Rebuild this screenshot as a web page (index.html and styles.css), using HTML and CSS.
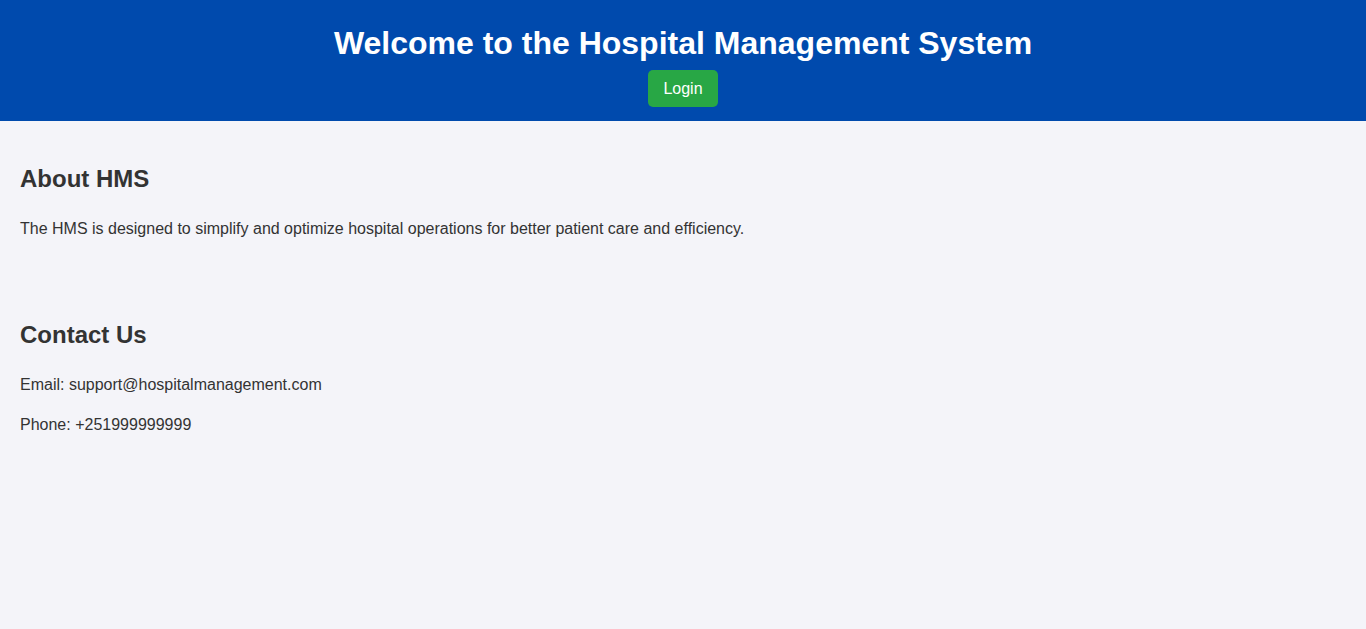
FILE: index.html
```html
<!DOCTYPE html>
<html lang="en">
<head>
<meta charset="utf-8">
<title>Hospital Management System</title>
<link rel="stylesheet" href="styles.css">
</head>
<body>
<header class="site-header">
  <h1 class="site-title">Welcome to the Hospital Management System</h1>
  <div class="header-actions"><button class="login-btn">Login</button></div>
</header>
<main class="content">
  <section class="section">
    <h2 class="section-title">About HMS</h2>
    <p class="text">The HMS is designed to simplify and optimize hospital operations for better patient care and efficiency.</p>
  </section>
  <section class="section">
    <h2 class="section-title">Contact Us</h2>
    <p class="text">Email: support@hospitalmanagement.com</p>
    <p class="text">Phone: +251999999999</p>
  </section>
</main>
</body>
</html>
```
FILE: styles.css
```css
html, body {
  margin: 0;
  padding: 0;
}
body {
  font-family: "Liberation Sans", Arial, sans-serif;
  line-height: 1.5;
  background: #f4f4f9;
  color: #333;
  min-height: 629px;
}
.site-header {
  background: #004aad;
  color: #fff;
  text-align: center;
  padding: 19px 0 14px;
}
.site-title {
  margin: 0;
  font-size: 32px;
  line-height: 48px;
  font-weight: bold;
}
.header-actions {
  margin-top: 3px;
  display: flex;
  justify-content: center;
}
.login-btn {
  font-family: "Liberation Sans", Arial, sans-serif;
  font-size: 16px;
  line-height: 24px;
  padding: 7px 15.5px 6px;
  background: #28a745;
  color: #fff;
  border: none;
  border-radius: 5px;
  cursor: pointer;
}
.section {
  padding: 20px;
}
.section-title {
  font-size: 24px;
  line-height: 36px;
  margin: 20px 0;
  color: #333;
}
.text {
  font-size: 16px;
  line-height: 24px;
  margin: 16px 0;
}
```
